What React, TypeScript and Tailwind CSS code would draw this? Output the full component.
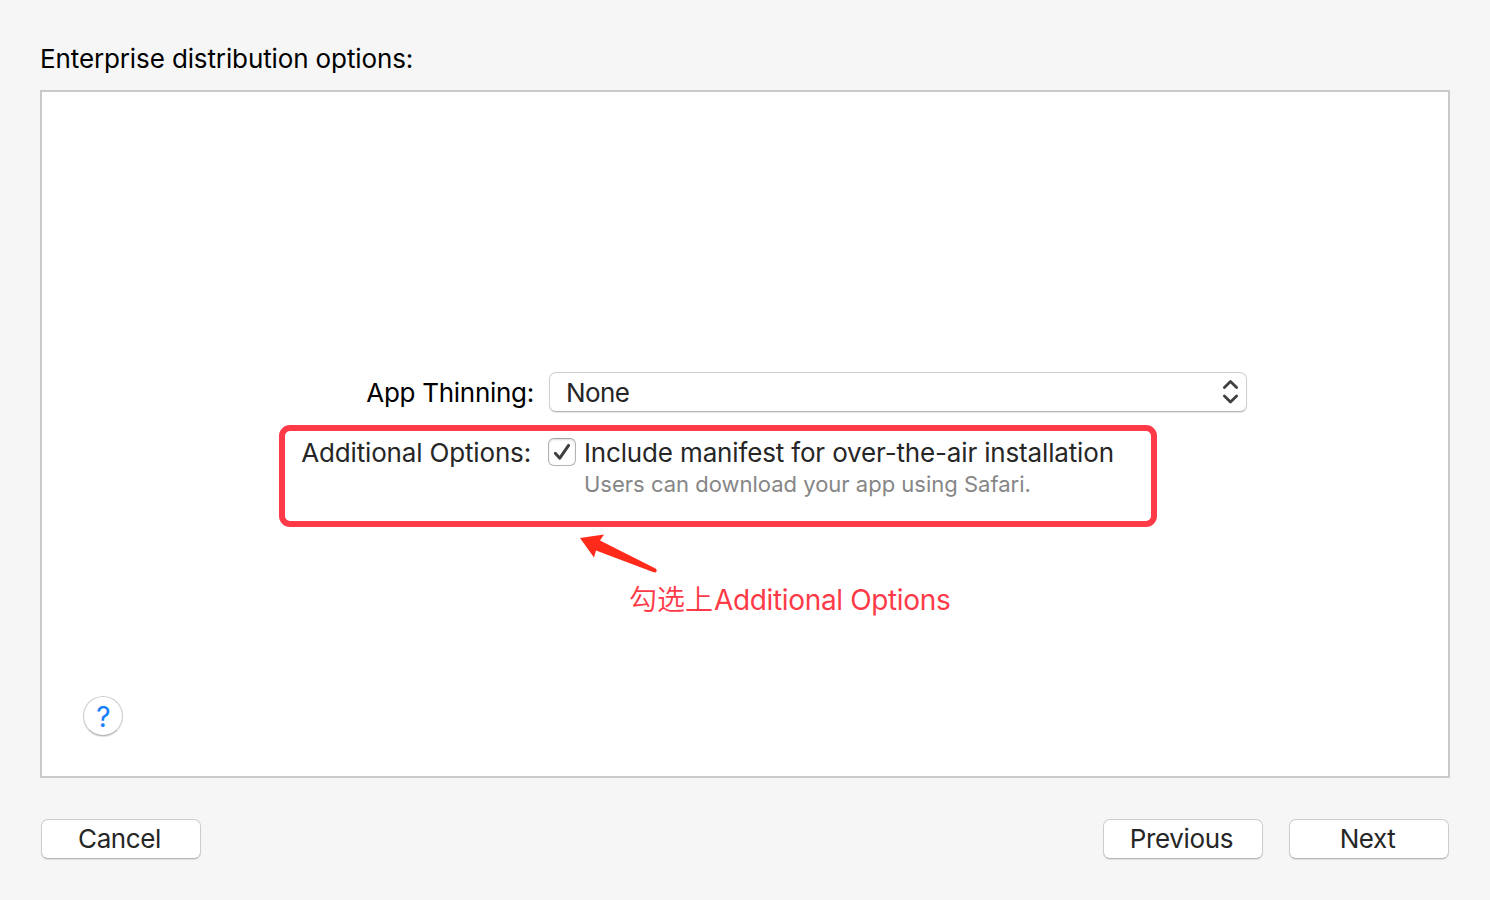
import React from "react";

type ButtonProps = { children: React.ReactNode };

function PushButton({ children }: ButtonProps) {
  return (
    <button
      type="button"
      className="flex h-10 w-40 items-center justify-center rounded-[7px] border border-[#cdcdcd] border-b-[#b6b6b6] bg-white pr-[3px] text-[#262626] shadow-[0_1px_1px_rgba(0,0,0,0.1)]"
    >
      {children}
    </button>
  );
}

function Chevrons() {
  return (
    <svg width="18" height="26" viewBox="0 0 18 26" fill="none" stroke="#404040" strokeWidth="2.8" strokeLinecap="round" strokeLinejoin="round">
      <path d="M2.4 8.600 8.500 2.600l6.100 6" />
      <path d="M2.400 17.100 8.500 23.100l6.100-6" />
    </svg>
  );
}

function Checkbox() {
  return (
    <span className="flex h-7 w-7 shrink-0 items-center justify-center rounded-[6px] border border-[#b4b4b4] border-t-[#a6a6a6] bg-white shadow-[inset_0_1px_2px_rgba(0,0,0,0.14)]">
      <svg width="26" height="26" viewBox="0 0 26 26" fill="none" stroke="#404040" strokeWidth="3" strokeLinecap="round" strokeLinejoin="round">
        <path d="M6.300 14.300 10.800 19.200 19.600 6.400" />
      </svg>
    </span>
  );
}

export default function App() {
  return (
    <div className="relative flex h-[900px] w-[1490px] flex-col overflow-hidden bg-[#f6f6f6] px-10 pt-10 pb-10 font-['Inter','Noto_Sans_CJK_SC',sans-serif] text-[26px] leading-[38px] text-black">
      <h1 className="h-[50px] font-normal tracking-[-0.12px] whitespace-nowrap">
        Enterprise distribution options:
      </h1>

      <main className="flex h-[688px] flex-col border-2 border-[#c9c9c9] bg-white pt-[280px]">
        <div className="flex h-10 items-center">
          <span className="w-[492px] pt-[2px] text-right tracking-[-0.28px] whitespace-nowrap">App Thinning:</span>
          <div className="ml-[15px] flex h-10 w-[698px] items-center justify-between rounded-[7px] border border-[#d0d0d0] border-b-[#b6b6b6] bg-white pr-[6px] pl-4 text-[#262626] shadow-[0_1px_1px_rgba(0,0,0,0.1)]">
            <span className="pt-[2px] tracking-[-0.6px]">None</span>
            <Chevrons />
          </div>
        </div>

        <div className="mt-[22px] flex h-[70px] text-[#262626]">
          <span className="w-[489px] text-right tracking-[-0.16px] whitespace-nowrap">Additional Options:</span>
          <div className="mt-[4px] ml-[17px]">
            <Checkbox />
          </div>
          <div className="ml-2 flex flex-col whitespace-nowrap">
            <span className="tracking-[-0.155px]">Include manifest for over-the-air installation</span>
            <span className="text-[22px] leading-6 text-[#868686]">Users can download your app using Safari.</span>
          </div>
        </div>

        <div className="mt-auto mb-10 ml-[41px] flex h-10 w-10 items-center justify-center rounded-full border border-[#cfcfcf] border-b-[#b6b6b6] bg-white pt-px pl-px text-[28px] font-normal text-[#147efb] shadow-[0_1px_1px_rgba(0,0,0,0.12)]">
          ?
        </div>
      </main>

      <footer className="mt-[41px] flex justify-between px-px">
        <PushButton><span className="tracking-[-0.4px]">Cancel</span></PushButton>
        <div className="flex gap-[26px]">
          <PushButton><span className="tracking-[-0.35px]">Previous</span></PushButton>
          <PushButton><span className="tracking-[-0.45px]">Next</span></PushButton>
        </div>
      </footer>

      <div className="pointer-events-none absolute top-[425px] left-[279px] h-[102px] w-[878px] rounded-[11px] border-[6px] border-[#fe3a48]" />
      <svg className="pointer-events-none absolute top-[530px] left-[576px]" width="86" height="46" viewBox="0 0 86 46" fill="#ff2a1a">
        <path d="M4 8 28 4.500 24 10.500 79.500 38.500Q81.500 40 80.500 41.500 79.500 43 77 42L20 20.500 18 27.500Z" />
      </svg>
      <p className="absolute top-[581px] left-[629px] text-[28px] font-[350] whitespace-nowrap text-[#fe3a48]">
        <span>勾选上</span><span className="ml-px font-normal tracking-[-0.35px]">Additional Options</span>
      </p>
    </div>
  );
}
